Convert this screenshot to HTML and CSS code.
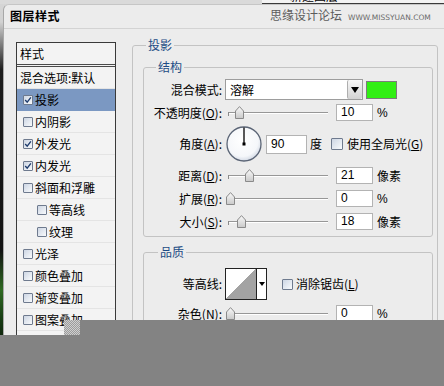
FILE: index.html
```html
<!DOCTYPE html>
<html lang="zh-CN">
<head>
<meta charset="utf-8">
<title>图层样式</title>
<link rel="stylesheet" href="styles.css">
</head>
<body>
<svg class="defs" width="0" height="0" aria-hidden="true">
  <defs>
    <linearGradient id="knobg" x1="0" y1="0" x2="0" y2="1">
      <stop offset="0" stop-color="#fafafa"/>
      <stop offset="1" stop-color="#c9c9c9"/>
    </linearGradient>
    <radialGradient id="dialg" cx="45%" cy="40%" r="62%">
      <stop offset="0" stop-color="#ffffff"/>
      <stop offset="0.75" stop-color="#f5f7fa"/>
      <stop offset="1" stop-color="#cfd6e2"/>
    </radialGradient>
  </defs>
</svg>

<div class="topstrip"><div class="otherwin"><span class="otherwin-text">新建图层</span></div></div>

<div class="dialog">
  <div class="titlebar">图层样式</div>
  <div class="watermark"><span class="wm-cn">思缘设计论坛</span><span class="wm-en">WWW.MISSYUAN.COM</span></div>

  <div class="content">
    <ul class="stylelist">
      <li class="sl-head">样式</li>
      <li class="sl-row plain">混合选项:默认</li>
      <li class="sl-row selected"><span class="cb"><svg viewBox="0 0 10 10" width="8" height="8"><polyline points="1.5,5 4,7.8 8.6,1.8" fill="none" stroke="#1f3d6e" stroke-width="1.7"/></svg></span>投影</li>
      <li class="sl-row"><span class="cb"></span>内阴影</li>
      <li class="sl-row"><span class="cb"><svg viewBox="0 0 10 10" width="8" height="8"><polyline points="1.5,5 4,7.8 8.6,1.8" fill="none" stroke="#1f3d6e" stroke-width="1.7"/></svg></span>外发光</li>
      <li class="sl-row"><span class="cb"><svg viewBox="0 0 10 10" width="8" height="8"><polyline points="1.5,5 4,7.8 8.6,1.8" fill="none" stroke="#1f3d6e" stroke-width="1.7"/></svg></span>内发光</li>
      <li class="sl-row"><span class="cb"></span>斜面和浮雕</li>
      <li class="sl-row sub"><span class="cb"></span>等高线</li>
      <li class="sl-row sub"><span class="cb"></span>纹理</li>
      <li class="sl-row"><span class="cb"></span>光泽</li>
      <li class="sl-row"><span class="cb"></span>颜色叠加</li>
      <li class="sl-row"><span class="cb"></span>渐变叠加</li>
      <li class="sl-row"><span class="cb"></span>图案叠加</li>
      <li class="sl-row"><span class="cb"></span>描边</li>
    </ul>

    <fieldset class="group outer">
      <legend>投影</legend>

      <fieldset class="group inner">
        <legend>结构</legend>

        <div class="row r-blend">
          <span class="lbl">混合模式:</span>
          <div class="select"><span class="select-val">溶解</span><span class="select-btn"></span></div>
          <span class="swatch"></span>
        </div>

        <div class="row r-gap4">
          <span class="lbl">不透明度(<u>O</u>):</span>
          <div class="slider"><span class="track"></span><svg class="knob" style="left:7px" width="9" height="13" viewBox="0 0 9 13"><path d="M0.5,5 L4.5,0.6 L8.5,5 L8.5,12.5 L0.5,12.5 Z" fill="url(#knobg)" stroke="#8a8a8a"/></svg></div>
          <span class="num">10</span>
          <span class="unit lat">%</span>
        </div>

        <div class="row r-angle">
          <span class="lbl">角度(<u>A</u>):</span>
          <svg class="dial" width="36" height="36" viewBox="0 0 36 36">
            <circle cx="18" cy="18" r="17" fill="url(#dialg)" stroke="#5b6576" stroke-width="1.3"/>
            <line x1="18" y1="18" x2="18" y2="1.5" stroke="#000" stroke-width="1.3"/>
            <rect x="16.5" y="16.5" width="3" height="3" fill="#000"/>
          </svg>
          <span class="num wide">90</span>
          <span class="unit deg">度</span>
          <span class="cb big"></span>
          <span class="cbtext">使用全局光(<u>G</u>)</span>
        </div>

        <div class="row r-gap5">
          <span class="lbl">距离(<u>D</u>):</span>
          <div class="slider"><span class="track"></span><svg class="knob" style="left:17px" width="9" height="13" viewBox="0 0 9 13"><path d="M0.5,5 L4.5,0.6 L8.5,5 L8.5,12.5 L0.5,12.5 Z" fill="url(#knobg)" stroke="#8a8a8a"/></svg></div>
          <span class="num">21</span>
          <span class="unit">像素</span>
        </div>

        <div class="row r-gap6">
          <span class="lbl">扩展(<u>R</u>):</span>
          <div class="slider"><span class="track"></span><svg class="knob" style="left:-2px" width="9" height="13" viewBox="0 0 9 13"><path d="M0.5,5 L4.5,0.6 L8.5,5 L8.5,12.5 L0.5,12.5 Z" fill="url(#knobg)" stroke="#8a8a8a"/></svg></div>
          <span class="num">0</span>
          <span class="unit lat">%</span>
        </div>

        <div class="row r-gap6">
          <span class="lbl">大小(<u>S</u>):</span>
          <div class="slider"><span class="track"></span><svg class="knob" style="left:9px" width="9" height="13" viewBox="0 0 9 13"><path d="M0.5,5 L4.5,0.6 L8.5,5 L8.5,12.5 L0.5,12.5 Z" fill="url(#knobg)" stroke="#8a8a8a"/></svg></div>
          <span class="num">18</span>
          <span class="unit">像素</span>
        </div>
      </fieldset>

      <fieldset class="group quality">
        <legend>品质</legend>

        <div class="row r-contour">
          <span class="lbl">等高线:</span>
          <div class="contour"><span class="contour-img"></span><span class="contour-btn"></span></div>
          <span class="cb mid"></span>
          <span class="cbtext">消除锯齿(<u>L</u>)</span>
        </div>

        <div class="row r-gap5">
          <span class="lbl">杂色(<u>N</u>):</span>
          <div class="slider"><span class="track"></span><svg class="knob" style="left:-2px" width="9" height="13" viewBox="0 0 9 13"><path d="M0.5,5 L4.5,0.6 L8.5,5 L8.5,12.5 L0.5,12.5 Z" fill="url(#knobg)" stroke="#8a8a8a"/></svg></div>
          <span class="num">0</span>
          <span class="unit lat">%</span>
        </div>
      </fieldset>
    </fieldset>
  </div>
</div>

<div class="shade shade-main"></div>
<div class="shade shade-left"></div>
<div class="dither"></div>
</body>
</html>
```
FILE: styles.css
```css
* { box-sizing: border-box; }

html, body { margin: 0; padding: 0; }

body {
  width: 444px;
  height: 386px;
  overflow: hidden;
  position: relative;
  display: flex;
  flex-direction: column;
  font-family: "Noto Sans CJK SC", "Noto Sans", sans-serif;
  font-size: 12px;
  color: #000;
  background: linear-gradient(to bottom, #d6d6d6 0, #d2d2d2 22px, #1c1c1c 70px, #121212 250px, #2f6a22 290px, #163a12 320px, #0e220c 340px);
}

.defs { position: absolute; width: 0; height: 0; }

/* strip of the window behind */
.topstrip {
  height: 4px;
  flex: none;
  display: flex;
  justify-content: flex-end;
  background: #dadada;
}
.otherwin {
  width: 182px;
  height: 4px;
  background: #f3f3f3;
  border-bottom: 1px solid #3a3a3a;
  overflow: hidden;
  padding-left: 28px;
}
.otherwin-text {
  display: block;
  font-size: 12px;
  line-height: 12px;
  margin-top: -10px;
}

/* dialog */
.dialog {
  flex: 1;
  min-height: 0;
  overflow: hidden;
  margin-left: 3px;
  position: relative;
  background: #ececec;
  border-left: 1px solid #a8a8a8;
  border-top: 1px solid #c6c6c6;
  border-top-left-radius: 6px;
  display: flex;
  flex-direction: column;
}
.titlebar {
  height: 24px;
  flex: none;
  padding-left: 6px;
  font-weight: 700;
  font-size: 12px;
  line-height: 22px;
  letter-spacing: 0.5px;
  border-bottom: 1px solid #d3d3d3;
}
.watermark {
  position: absolute;
  top: 3px;
  left: 266px;
  height: 14px;
  display: flex;
  align-items: baseline;
  white-space: nowrap;
  color: #5c5c5c;
}
.wm-cn { font-size: 12px; line-height: 14px; }
.wm-en {
  margin-left: 6px;
  font-family: "DejaVu Sans", sans-serif;
  font-size: 7.5px;
  color: #6a6a6a;
}

.content {
  flex: 1;
  min-height: 0;
  display: flex;
  align-items: flex-start;
  padding: 9px 0 0 12px;
}

/* style list */
.stylelist {
  list-style: none;
  margin: 4px 0 0 0;
  padding: 0;
  width: 100px;
  height: 310px;
  flex: none;
  overflow: hidden;
  background: #f3f3f3;
  border: 1px solid #3a3a3a;
}
.sl-head {
  height: 24px;
  line-height: 21px;
  padding-left: 3px;
  border-bottom: 3px double #4a4a4a;
}
.sl-row {
  height: 22px;
  display: flex;
  align-items: center;
  padding-left: 6px;
  border-bottom: 1px solid #e4e4e4;
  white-space: nowrap;
  line-height: 14px;
}
.sl-row.plain { padding-left: 3px; }
.sl-row.sub { padding-left: 20px; }
.sl-row.selected { background: #7b98c2; border-bottom-color: #7b98c2; }

.cb {
  width: 10px;
  height: 10px;
  flex: none;
  margin-right: 2px;
  border: 1px solid #6e7a8e;
  border-radius: 1px;
  background: linear-gradient(135deg, #cdd6e4, #f8fafc);
  display: flex;
  align-items: center;
  justify-content: center;
}
.cb.big { width: 12px; height: 12px; margin-left: 9px; margin-right: 4px; }
.cb.mid { width: 11px; height: 11px; margin-left: 15px; margin-right: 3px; }

/* group boxes */
.group {
  margin: 0;
  min-width: 0;
  border: 1px solid #c3c3c3;
  border-radius: 3px;
}
.group > legend {
  padding: 0 2px;
  line-height: 14px;
  font-size: 12px;
  color: #1d4c85;
}
.outer {
  width: 306px;
  height: 330px;
  flex: none;
  margin-left: 16px;
  padding: 8px 3px 0 10px;
}
.outer > legend { margin-left: 3px; }
.inner {
  width: 290px;
  padding: 5px 0 6px 0;
}
.inner > legend { margin-left: 12px; }
.quality {
  width: 290px;
  height: 90px;
  margin-top: 8px;
  padding: 9px 0 0 0;
}
.quality > legend { margin-left: 14px; }

/* rows */
.row {
  display: flex;
  align-items: center;
  height: 17px;
  white-space: nowrap;
}
.r-blend { height: 21px; }
.r-gap4 { margin-top: 4px; }
.r-gap5 { margin-top: 5px; }
.r-gap6 { margin-top: 6px; }
.r-angle { height: 36px; margin-top: 5px; }
.r-contour { height: 32px; }

.lbl {
  width: 80px;
  flex: none;
  text-align: right;
  padding-right: 2px;
  line-height: 14px;
}
u { text-decoration-thickness: 1px; text-underline-offset: 1px; }

.select {
  margin-left: 1px;
  width: 138px;
  height: 21px;
  flex: none;
  display: flex;
  background: #fff;
  border: 1px solid #9d9d9d;
}
.select-val { flex: 1; padding-left: 4px; line-height: 19px; }
.select-btn {
  width: 15px;
  flex: none;
  display: flex;
  align-items: center;
  justify-content: center;
  border-left: 1px solid #aeaeae;
  border-radius: 2px;
  background: linear-gradient(#f7f7f7, #d3d3d3);
}
.select-btn::after {
  content: "";
  border-left: 4px solid transparent;
  border-right: 4px solid transparent;
  border-top: 6px solid #000;
}
.swatch {
  margin-left: 3px;
  width: 31px;
  height: 18px;
  flex: none;
  background: #31ef14;
  border: 1px solid #7c7c7c;
}

.slider {
  position: relative;
  margin-left: 4px;
  width: 100px;
  height: 13px;
  flex: none;
}
.track {
  display: block;
  position: relative;
  margin-top: 6px;
  height: 2px;
  border-top: 1px solid #979797;
  border-bottom: 1px solid #ffffff;
}
.track::before {
  content: "";
  position: absolute;
  left: 0;
  top: -1px;
  width: 1px;
  height: 4px;
  background: #8a8a8a;
}
.knob { position: absolute; top: 0; }

.num {
  margin-left: 8px;
  width: 37px;
  height: 17px;
  flex: none;
  padding-left: 4px;
  background: #fff;
  border: 1px solid #b3b3b3;
  font-family: "Liberation Sans", Arial, sans-serif;
  font-size: 12px;
  line-height: 15px;
}
.num.wide { width: 41px; height: 19px; margin-left: 4px; line-height: 17px; }
.unit { margin-left: 4px; line-height: 14px; }
.unit.lat { font-family: "Liberation Sans", Arial, sans-serif; font-size: 12px; }
.deg { margin-left: 3px; }
.dial { margin-left: 2px; flex: none; }
.cbtext { line-height: 14px; }

.contour {
  margin-left: 1px;
  width: 42px;
  height: 32px;
  flex: none;
  display: flex;
  border: 1px solid #222;
}
.contour-img {
  width: 31px;
  border-right: 1px solid #222;
  background: linear-gradient(to bottom right, #ffffff 50%, #a3a3a3 50%);
}
.contour-btn {
  flex: 1;
  background: #fff;
  display: flex;
  align-items: center;
  justify-content: center;
}
.contour-btn::after {
  content: "";
  border-left: 3px solid transparent;
  border-right: 3px solid transparent;
  border-top: 4px solid #000;
}

/* grey cover over the lower part of the capture */
.shade { position: absolute; background: #838383; }
.shade-main { left: 80px; top: 320px; right: 0; bottom: 0; }
.shade-left { left: 0; top: 335px; width: 80px; bottom: 0; }
.dither {
  position: absolute;
  left: 64px;
  top: 320px;
  width: 16px;
  height: 15px;
  background: repeating-conic-gradient(#9c9c9c 0 25%, #cfcfcf 0 50%) 0 0 / 2px 2px;
}
```
